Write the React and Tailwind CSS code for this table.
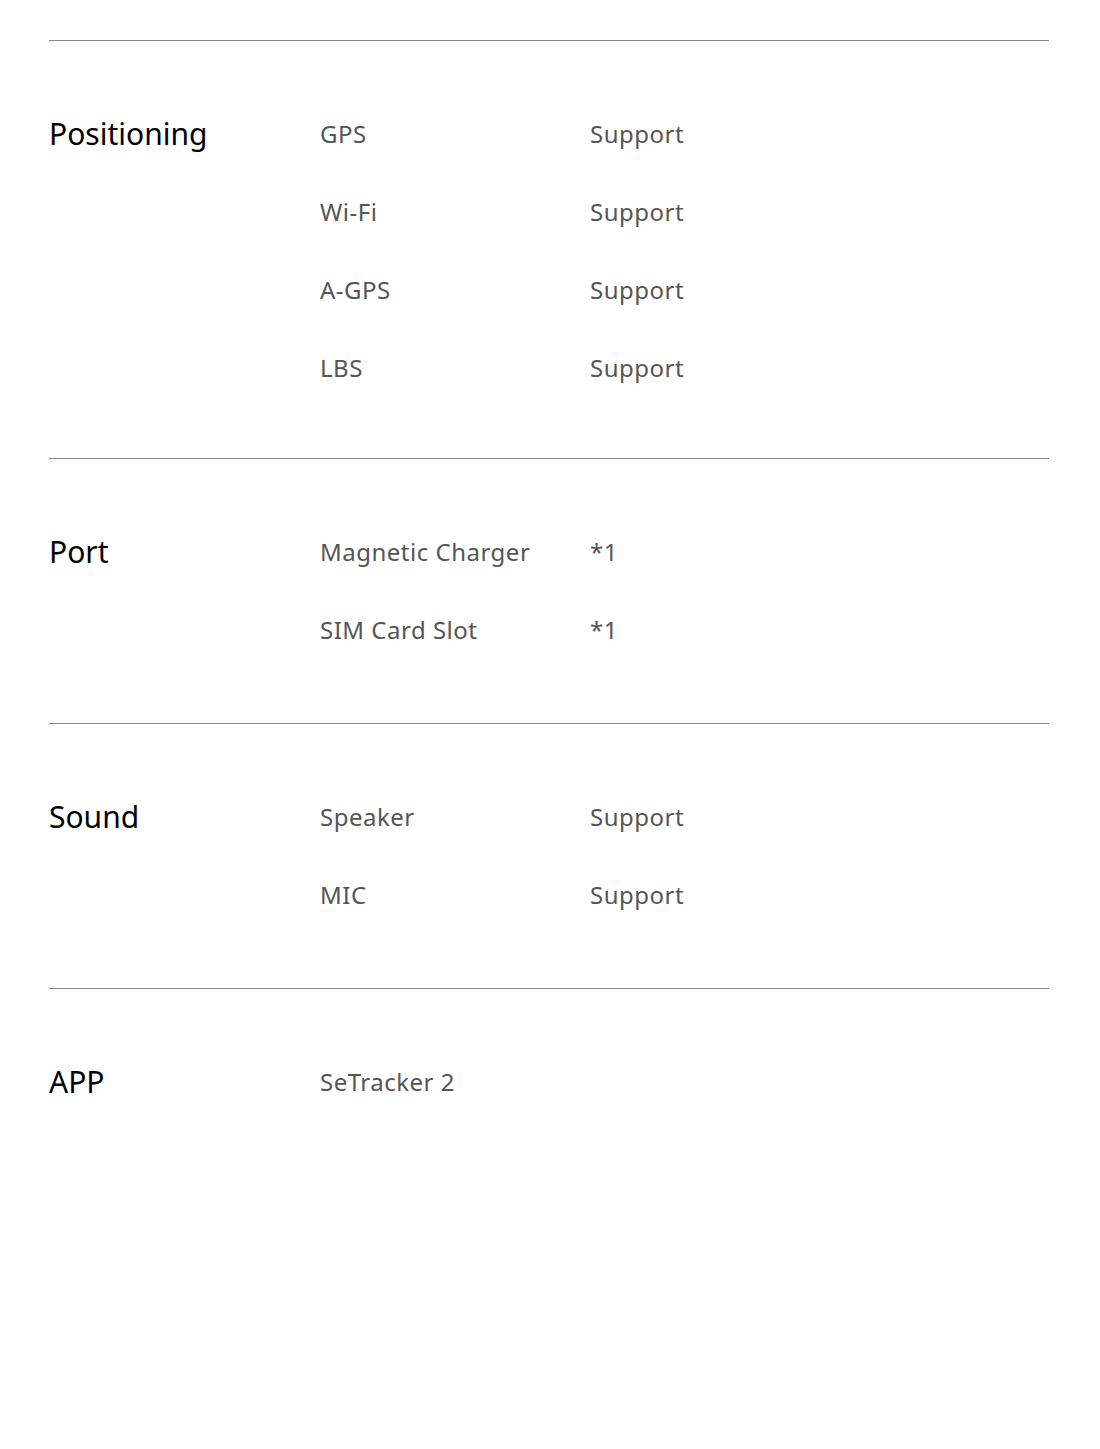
import React from "react";

const sections = [
    {
        title: "Positioning",
        pad: "pt-[54px] pb-[51px]",
        rows: [
            ["GPS", "Support"],
            ["Wi-Fi", "Support"],
            ["A-GPS", "Support"],
            ["LBS", "Support"],
        ],
    },
    {
        title: "Port",
        pad: "pt-[54px] pb-[54px]",
        rows: [
            ["Magnetic Charger", "*1"],
            ["SIM Card Slot", "*1"],
        ],
    },
    {
        title: "Sound",
        pad: "pt-[54px] pb-[54px]",
        rows: [
            ["Speaker", "Support"],
            ["MIC", "Support"],
        ],
    },
    {
        title: "APP",
        pad: "pt-[54px] pb-[54px]",
        rows: [["SeTracker 2", ""]],
    },
];

export default function App() {
    return (
        <div
            className="min-h-[1449px] bg-white pt-[40px] pl-[49px]"
            style={{ fontFamily: '"Noto Sans", "Open Sans", sans-serif' }}
        >
            <div className="w-[1000px]">
                {sections.map((section) => (
                    <div
                        key={section.title}
                        className={`flex border-t border-[#8a8a8a] ${section.pad}`}
                    >
                        <div className="w-[271px] shrink-0 text-[30px] leading-[78px] text-black">
                            {section.title}
                        </div>
                        <div className="flex flex-col">
                            {section.rows.map(([label, value]) => (
                                <div
                                    key={label}
                                    className="flex text-[24px] leading-[78px] tracking-[0.5px] text-[#555555]"
                                >
                                    <span className="w-[270px] shrink-0">{label}</span>
                                    <span>{value}</span>
                                </div>
                            ))}
                        </div>
                    </div>
                ))}
            </div>
        </div>
    );
}
